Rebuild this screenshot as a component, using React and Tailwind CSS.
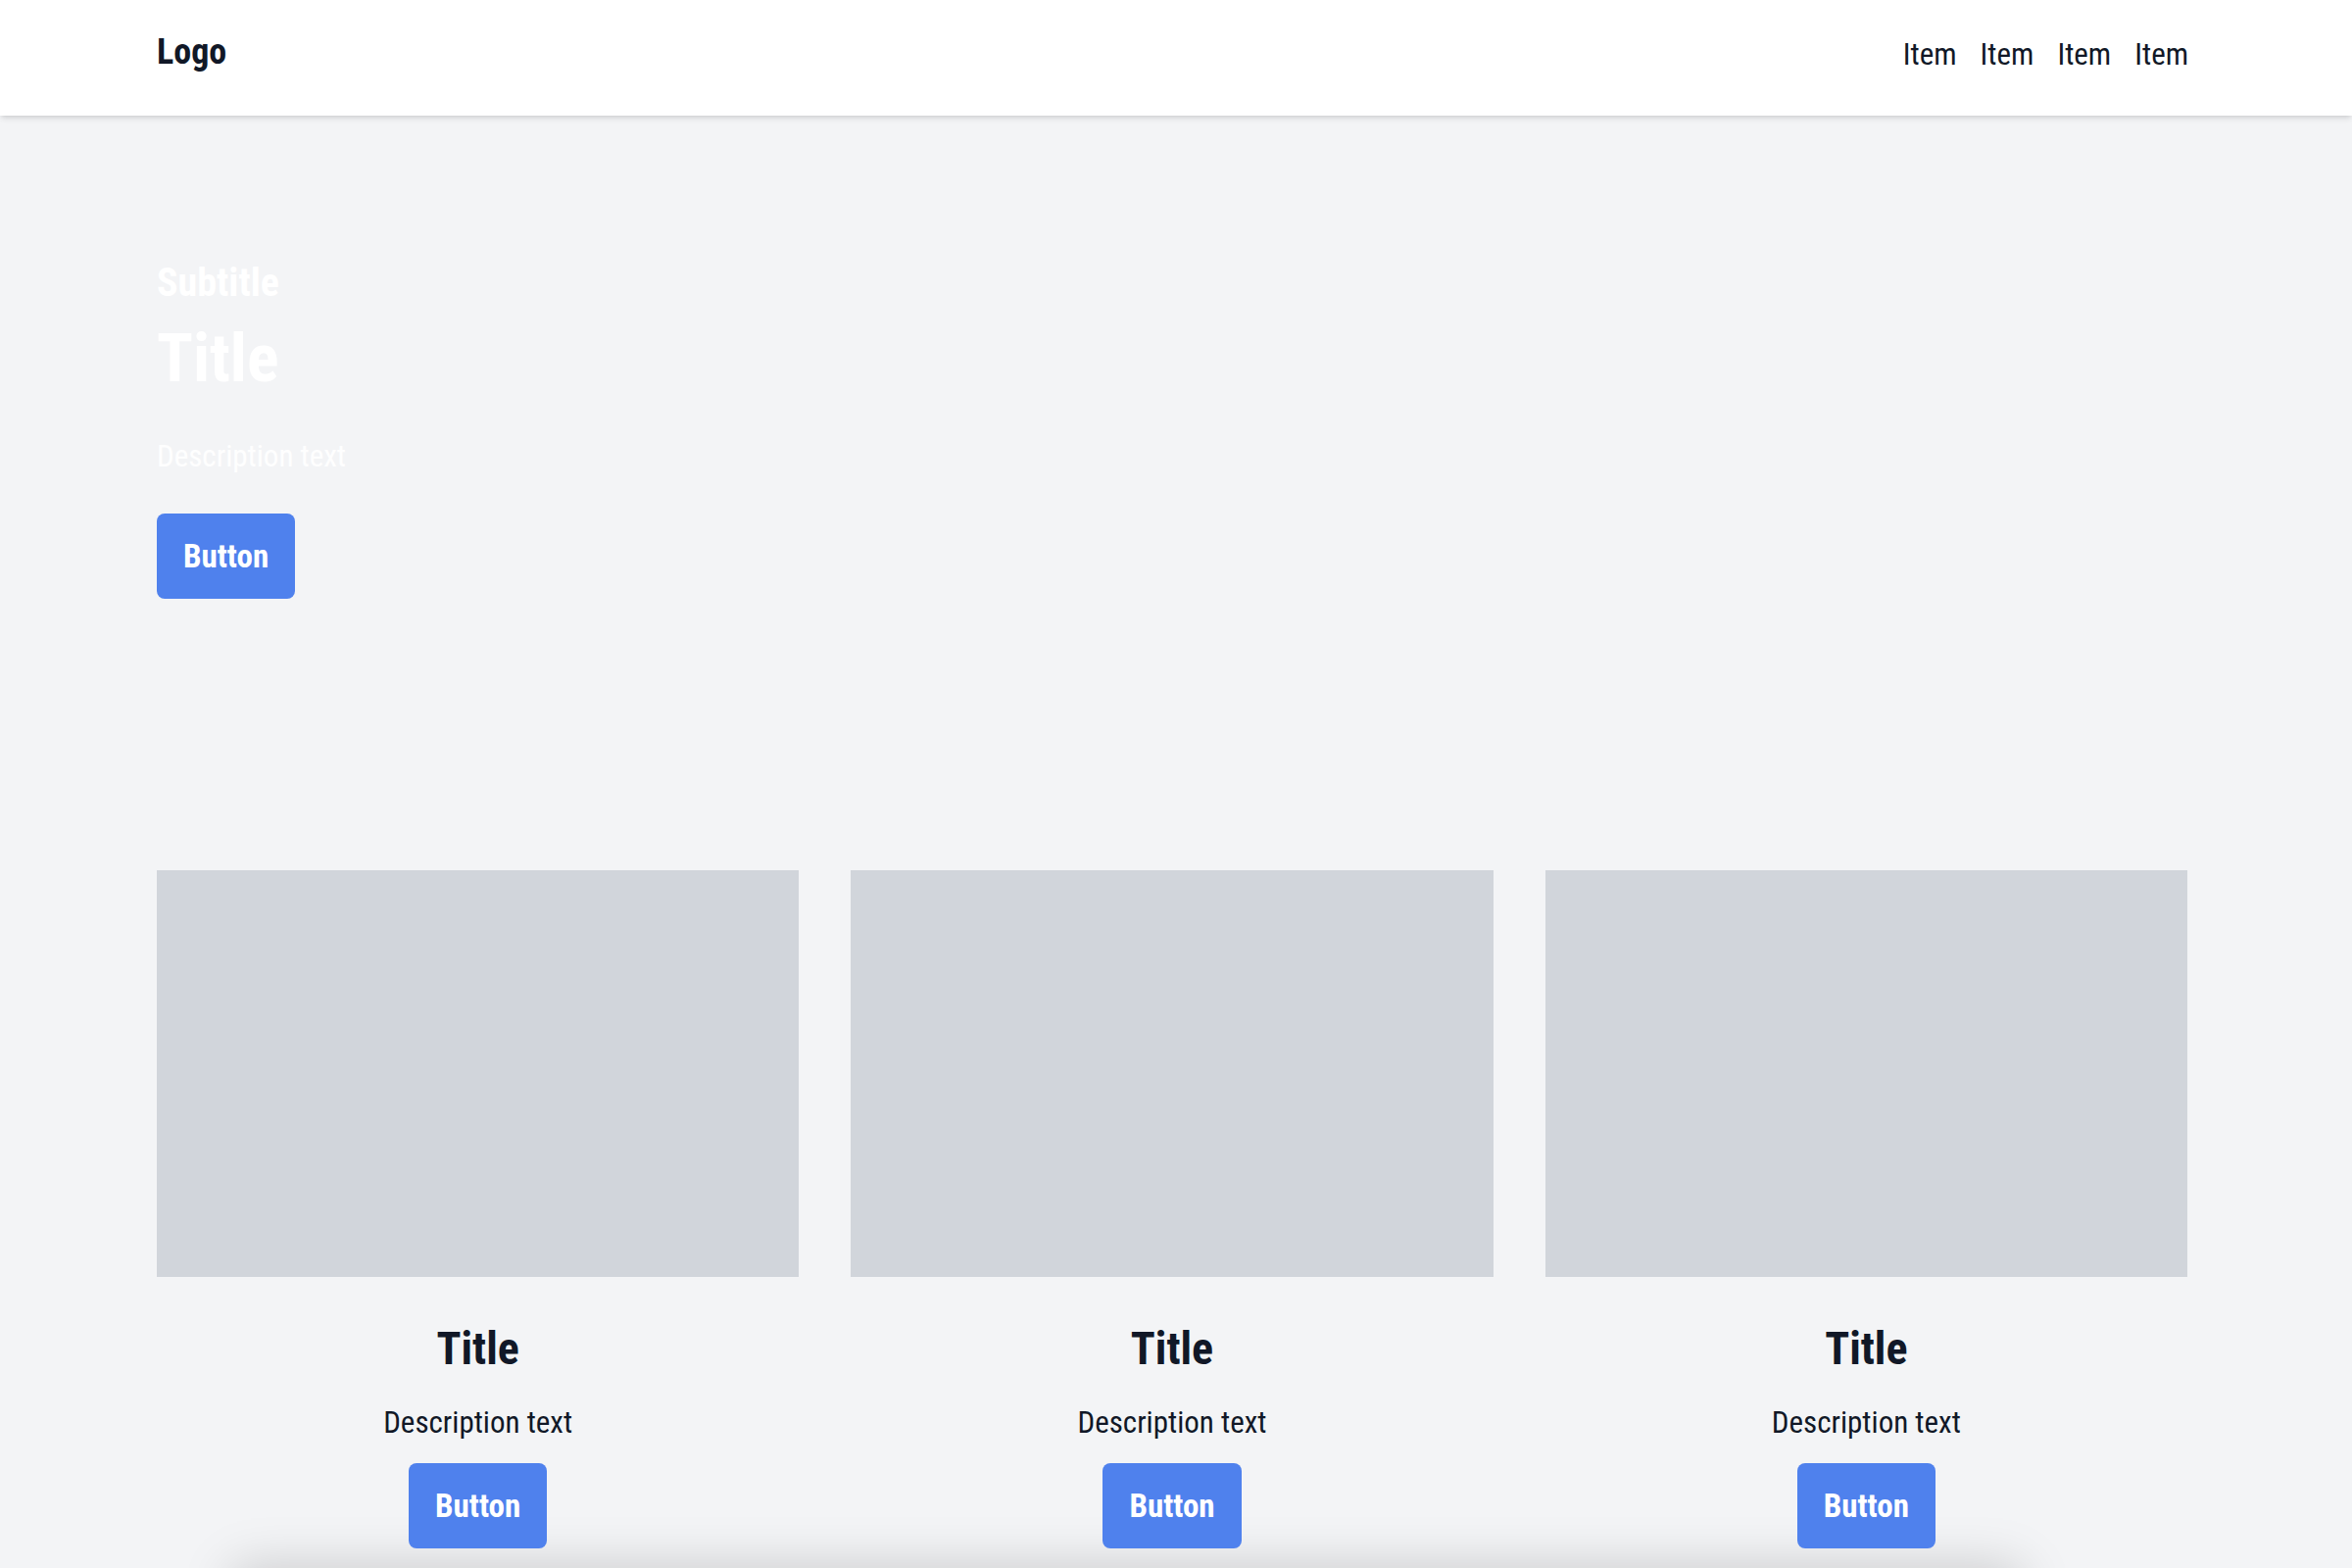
const navItems = ["Item", "Item", "Item", "Item"];
const cards = [1, 2, 3];

const Button = () => (
  <button className="h-[87px] px-[27px] rounded-lg bg-[#4f81ed] text-white text-[33px] leading-none font-bold">
    Button
  </button>
);

export default function App() {
  return (
    <div className="min-h-screen bg-[#f3f4f6] font-['Roboto_Condensed',_sans-serif] overflow-hidden">
      {/* Header */}
      <header className="bg-white shadow-md relative z-10">
        <div className="h-[118px] pb-3 pl-[160px] pr-[167px] flex items-center justify-between">
          <div className="text-[36px] leading-none font-bold text-[#111827]">Logo</div>
          <nav className="flex items-center gap-6 pt-[5px]">
            {navItems.map((item, i) => (
              <a key={i} className="text-[31px] leading-none text-[#111827]">
                {item}
              </a>
            ))}
          </nav>
        </div>
      </header>

      {/* Hero */}
      <section className="pl-[160px] pr-[168px] pt-[151px] pb-[148px]">
        <p className="text-[40px] leading-none font-bold text-white">Subtitle</p>
        <h1 className="mt-[23px] text-[68px] leading-none font-bold text-white">Title</h1>
        <p className="mt-[50px] text-[31px] leading-none text-white/90">Description text</p>
        <div className="mt-[43px]">
          <Button />
        </div>
      </section>

      {/* Cards */}
      <section className="pl-[160px] pr-[168px] pt-[129px]">
        <div className="grid grid-cols-3 gap-[53px]">
          {cards.map((c) => (
            <div key={c} className="flex flex-col items-center">
              <div className="w-full h-[415px] bg-[#d1d5db]" />
              <h2 className="mt-[50px] text-[46px] leading-none font-bold text-[#111827]">Title</h2>
              <p className="mt-[37px] text-[31px] leading-none text-[#111827]">Description text</p>
              <div className="mt-[26px]">
                <Button />
              </div>
            </div>
          ))}
        </div>
      </section>

      {/* Footer (below the fold) */}
      <footer className="mt-[30px] ml-[230px] mr-[330px] h-[300px] bg-[#f3f4f6] shadow-[0_-18px_50px_-8px_rgba(0,0,0,0.18)]" />
    </div>
  );
}
